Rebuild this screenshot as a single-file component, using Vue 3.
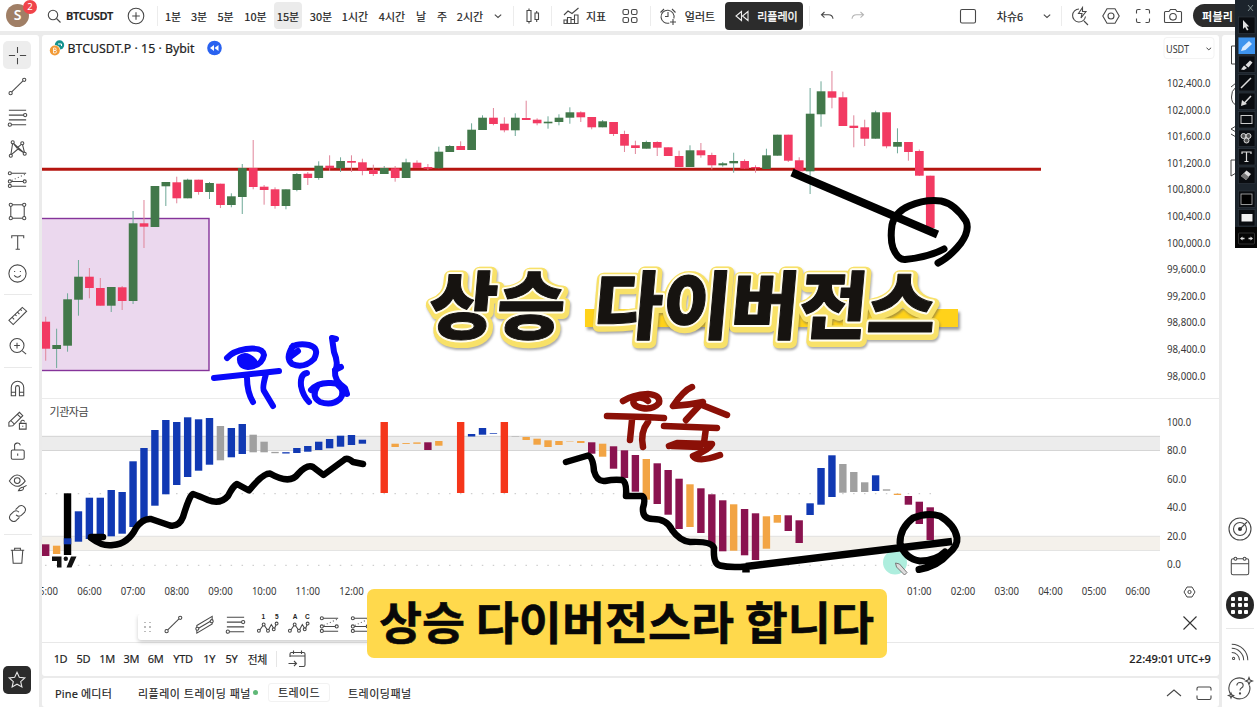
<script setup>
const icons = {
  search: '<circle cx="11" cy="11" r="4.7"/><path d="M14.5 14.5l4 4"/>',
  plus: '<circle cx="12" cy="12" r="7.8"/><path d="M12 8.2v7.6M8.2 12h7.6"/>',
  chev: '<path d="M8.8 10.6l3.2 2.8 3.2-2.8"/>',
  candles: '<path d="M7 6.5h4v11H7zM9 4.500v2M9 17.500v2M15 9h3.500v6.500H15zM16.700 7v2M16.700 15.500v2.500"/>',
  indic: '<path d="M5 11l4-4 4 2.500 6.500-5.500M5 19.500v-3.500h3v3.500M8.500 19.500v-6h3.500v6M12 19.500v-4h3.500v4M15.500 19.500v-8.500h3.500v8.500M4.500 19.500h15"/>',
  grid4: '<rect x="5" y="5.500" width="5.500" height="5" rx="1.500"/><rect x="13.500" y="5.500" width="5.500" height="5" rx="1.500"/><rect x="5" y="13.500" width="5.500" height="5" rx="1.500"/><rect x="13.500" y="13.500" width="5.500" height="5" rx="1.500"/>',
  alert: '<path d="M17.800 14.500a6.500 6.500 0 1 0-4.500 4.500M12 8v4.500H9M4.500 8.500l3.500-3.500M16 5l3.500 3.500M17 15v6M14 18h6"/>',
  rewind: '<path d="M11.500 7.500v9L6 12zM18 7.500v9L12.500 12z"/>',
  undo: '<path d="M9.500 8L6.500 10.800l3 2.800M6.500 10.800h7q4 0 4.500 4"/>',
  redo: '<path d="M14.500 8l3 2.800-3 2.800M17.500 10.800h-7q-4 0-4.500 4"/>',
  square: '<rect x="4.500" y="5.500" width="15" height="13.500" rx="1.500"/>',
  quick: '<path d="M11 5a6.500 6.500 0 1 0 6.500 7.500M16 17l4 4M14.500 3.500l-4 6h3.500l-1 4.500 5-6.500h-3.500z"/>',
  hex: '<path d="M8 4.800h8l4.200 7.200-4.200 7.200H8L3.800 12z"/><circle cx="12" cy="12" r="3"/>',
  full: '<path d="M5.500 9.500V7q0-1.500 1.500-1.500h2.500M14.500 5.500H17q1.500 0 1.500 1.500v2.500M18.500 14.500V17q0 1.500-1.500 1.500h-2.500M9.500 18.500H7q-1.500 0-1.500-1.500v-2.500"/>',
  camera: '<path d="M3.500 8.500q0-1 1-1H8L9.500 5.500h5L16 7.500h3.500q1 0 1 1v9q0 1-1 1h-15q-1 0-1-1z"/><circle cx="12" cy="12.800" r="3.300"/>',
  cross: '<path d="M12 3v6.500M12 14.500V21M3 12h6.500M14.500 12H21"/>',
  trend: '<circle cx="4.800" cy="19" r="1.700"/><circle cx="19" cy="5" r="1.700"/><path d="M6 17.700L17.700 6.200"/>',
  fib: '<path d="M3 4.500h18M3 9.500h16M3 14.500h18M5.500 19.500H21"/><circle cx="20" cy="9.500" r="1.700" fill="#fff"/><circle cx="4" cy="19.500" r="1.700" fill="#fff"/>',
  pattern: '<path d="M5 19L7 6l4.500 5.500L17 7l2.500 10-7-4.500L5 19M7 6l12.500 11"/><circle cx="5" cy="19.500" r="1.600" fill="#fff"/><circle cx="7" cy="5.500" r="1.600" fill="#fff"/><circle cx="17" cy="6.500" r="1.600" fill="#fff"/><circle cx="19.500" cy="17.500" r="1.600" fill="#fff"/>',
  forecast: '<path d="M5 5.500h16M5 14h14M5 19h16"/><path d="M6 13L20 6.500" stroke-dasharray="1 2.500"/><circle cx="4" cy="5.500" r="1.600" fill="#fff"/><circle cx="4" cy="14" r="1.600" fill="#fff"/><circle cx="19.500" cy="14" r="1.600" fill="#fff"/><circle cx="4" cy="18.700" r="1.600" fill="#fff"/>',
  shape: '<rect x="5" y="5" width="14" height="14"/><circle cx="5" cy="5" r="1.700" fill="#fff"/><circle cx="19" cy="5" r="1.700" fill="#fff"/><circle cx="5" cy="19" r="1.700" fill="#fff"/><circle cx="19" cy="19" r="1.700" fill="#fff"/>',
  text: '<path d="M6 7.500V5h12.500v2.500M12.200 5v14M10 19h4.500"/>',
  smile: '<circle cx="12" cy="12" r="9"/><path d="M8.500 14q3.500 3.800 7 0M9 9.300v1.200M15 9.300v1.200"/>',
  ruler: '<path d="M3 17L17 3.500l4.500 4L7.500 21.500zM6.500 14l2 2M9.500 11l1.500 1.500M12 8.500l2 2M15 5.500l1.500 1.500"/>',
  zoomin: '<circle cx="11.500" cy="11" r="7.300"/><path d="M17 16.500l4 3.500M11.500 8v6M8.500 11h6"/>',
  magnet: '<path d="M5.500 19.500V11a6.500 6.500 0 0 1 13 0v8.500h-4.500V11a2 2 0 0 0-4 0v8.500zM5.500 16h4.500M14 16h4.500"/>',
  penlock: '<path d="M3 14L14 3.500l3.500 3.500L7 17.500 3 18zM5 12l4 4M12 5.500l3.500 3.500"/><path d="M14 15h7v6h-7zM15.500 15v-2q2-2.500 4 0M17.500 17.500v1"/>',
  lock: '<rect x="5.500" y="10.500" width="13.500" height="9.500" rx="1.500"/><path d="M9 10.500V7a3 3 0 0 1 6-1.500M12.200 14v2.500"/>',
  eye: '<path d="M3.500 10.500q8-12.500 16.500 0-8.500 11-16.500 0z"/><circle cx="11.700" cy="10" r="3"/><path d="M13 20.500q2-4 5-3.500 1.500 3.500-5 3.500zM18 17l3.500-2"/>',
  link: '<path d="M10 8l3.500-3.500q3-2 5.500.5t.5 5.500L16 14q-3 2-5.500-.500M14 16l-3.500 3.500q-3 2-5.500-.500t-.500-5.500L8 10q3-2 5.500.500" />',
  trash: '<path d="M5 6.500h14M9 6.500V4.500h6v2M6.500 6.500L7.500 20h9l1-13.500"/>',
  star: '<path d="M12 4.300l2.300 5 5.500.6-4.100 3.700 1.200 5.400-4.900-2.800L7.100 19l1.200-5.400-4.100-3.700 5.500-.6z"/>',
  channel: '<path d="M4 13L20 3.500v8L4 21zM4 17l16-9.500"/><circle cx="4.500" cy="16.500" r="1.600" fill="#fff"/><circle cx="19.500" cy="8.500" r="1.600" fill="#fff"/>',
  wave: '<path d="M3.500 18.500L8 12l4.500 6.500L16 12l3 5 2.500-6"/><circle cx="3" cy="18.500" r="1.500" fill="#fff"/><circle cx="8" cy="12" r="1.500" fill="#fff"/><circle cx="12.500" cy="18.500" r="1.500" fill="#fff"/><circle cx="18.500" cy="17" r="1.500" fill="#fff"/><circle cx="21.500" cy="11" r="1.500" fill="#fff"/>',
  close: '<path d="M5.500 5.500l13 13M18.500 5.500l-13 13"/>',
  goto: '<path d="M5 10V7q0-1.500 1.500-1.500h12Q20 5.500 20 7v11q0 1.500-1.500 1.500H14M5 9h15M8.500 3.500V7M16.500 3.500V7M3.500 16.500h8M9 14l2.500 2.500L9 19"/>',
  up: '<path d="M5 15l7-6 7 6"/>',
  winmax: '<path d="M5 9.500V7.500Q5 6 6.500 6h11Q19 6 19 7.500v2M5 14.500v2.500q0 1.500 1.500 1.500h11q1.500 0 1.500-1.500v-2.500"/>',
  radar: '<circle cx="12" cy="12" r="11"/><circle cx="12" cy="12" r="6.500"/><circle cx="12" cy="12" r="1.500" fill="#222"/><path d="M12 12l7-7"/>',
  cal: '<rect x="2.500" y="4" width="19" height="17.500" rx="2"/><path d="M2.500 9.500h19"/><circle cx="7" cy="4" r="1.600" fill="#fff"/><circle cx="17" cy="4" r="1.600" fill="#fff"/>',
  feed: '<circle cx="5" cy="19" r="1.200"/><path d="M3 12.500a8.500 8.500 0 0 1 8.500 8.500M3 8a13 13 0 0 1 13 13M3 3.500A17.500 17.500 0 0 1 20.500 21"/>',
  help: '<path d="M17 3.500a10.500 10.500 0 1 0 4.500 6M8.800 9.500q.200-3 3.200-3t3.200 2.700q0 1.800-1.800 2.800-1.400.8-1.400 2.500"/><circle cx="12" cy="17.500" r=".600"/><path d="M21 1.500l1 2.500 2.500 1-2.500 1-1 2.500-1-2.500-2.500-1 2.500-1zM3 17l.700 1.800 1.800.700-1.800.700L3 22l-.700-1.800-1.800-.700 1.800-.700z" fill="#fff"/>',
}

const top = [
  { i: 'search', w: 22, m: 43 }, { t: 'BTCUSDT', w: 49, k: 'sym' }, { i: 'plus', w: 24, m: 10 }, { s: 1, w: 1, m: 9 },
  { t: '1분', w: 26, m: 2 }, { t: '3분', w: 26 }, { t: '5분', w: 27 }, { t: '10분', w: 31, m: 1 }, { t: '15분', w: 28, m: 3, k: 'on' },
  { t: '30분', w: 30, m: 4 }, { t: '1시간', w: 38 }, { t: '4시간', w: 36 }, { t: '날', w: 20, m: 1 }, { t: '주', w: 20, m: 1 },
  { t: '2시간', w: 34, m: 1 }, { i: 'chev', w: 24, m: -1 }, { s: 1, w: 1, m: 3 }, { i: 'candles', w: 24, m: 6 }, { s: 1, w: 1, m: 7 },
  { i: 'indic', w: 24, m: 7 }, { t: '지표', w: 24, m: 1 }, { i: 'grid4', w: 24, m: 10 }, { s: 1, w: 1, m: 8 }, { i: 'alert', w: 24, m: 5 },
  { t: '얼러트', w: 34, m: 3 }, { t: '리플레이', i: 'rewind', w: 78, m: 8, k: 'replay' }, { s: 1, w: 1, m: 6 },
  { i: 'undo', w: 24, m: 5 }, { i: 'redo', w: 24, m: 7, k: 'dim' }, { i: 'square', w: 24, m: 86 }, { t: '차슈6', w: 32, m: 14, k: 'sb' },
  { i: 'chev', w: 24, m: 9 }, { s: 1, w: 1, m: 2 }, { i: 'quick', w: 24, m: 6 }, { i: 'hex', w: 24, m: 7 }, { i: 'full', w: 24, m: 8 },
  { i: 'camera', w: 24, m: 6 }, { t: '퍼블리', w: 70, m: 8, k: 'pub' },
]
const left = ['cross', 'trend', 'fib', 'pattern', 'forecast', 'shape', 'text', 'smile', '', 'ruler', 'zoomin', '', 'magnet', 'penlock', 'lock', 'eye', 'link', '', 'trash']
const favs = ['trend', 'channel', 'fib', 'wave', 'wave', 'forecast', 'forecast']
const ranges = [['1D', 15], ['5D', 16], ['1M', 17], ['3M', 17], ['6M', 17], ['YTD', 23], ['1Y', 15], ['5Y', 15], ['전체', 22]]

const G = '#42784a', R = '#f23a62'
const X = (i) => 45.7 + i * 10.92
// [up?, body top, body bottom, wick top, wick bottom]
const candles = [
  [0,321.7,348.7,316.7,360.7],[1,345,349,328.7,368],[1,299.3,345.7,293.3,351.7],[1,276.7,299.7,260,315.7],[0,276.7,288,268,298.3],
  [0,288,305.7,278,305.7],[1,287,305.7,287,312],[0,287.3,301,286,310],[1,223.3,301,211,304],[0,223.3,226.7,200,248],[1,186,227,186,227],
  [1,182,186.3,182,206],[0,182.3,198.3,176.7,203.3],[1,179.7,198.3,178.7,198.3],[0,179.7,192,179.7,194.7],[1,183,192,182,199],
  [0,183.7,205,183.7,208],[1,196.3,205,193.3,207.3],[1,168,197,164,214],[0,168,187,140,189.3],[0,186.7,190,185,204.7],[0,189.3,206,187.3,208.7],
  [1,189.3,206,189.3,209.3],[1,174,190,173,191.3],[0,173.7,178,172,185],[1,165.7,178,161.3,179.7],[0,165.7,168.3,155.3,171],[1,161,168.3,157.3,172],
  [0,161,162.7,155.3,172],[0,162.3,171,158.7,175.3],[0,170,174,164.7,176],[1,168,174,166,174],[0,168.3,178,166,181.7],[1,162.3,178,158.7,178],
  [0,162.7,168,160.3,168],[0,167,168.7,164,170],[1,151.7,168.3,146.7,168.3],[1,146,152,145,152],[0,146,150,141.3,150],[1,129.7,150,123.3,150],
  [1,117.7,130,115.3,130],[0,117.7,124,108,125.3],[0,123.7,130.3,117.3,132.3],[1,117.7,130.3,113.3,136],[0,118,120,100.7,120],[0,119.7,123.3,118.3,125.3],
  [1,121.7,123.3,116.3,128.7],[1,117.7,122,114.3,125.3],[1,112.3,117.7,107.3,123.7],[0,112.3,117.3,111.3,122],[0,117,127.3,117,129.3],[1,121.3,127.3,120,127.3],
  [0,122,134,122,136],[0,134,145.7,130.7,152],[0,145.3,148,140.7,154],[1,142,148.7,140.7,148.7],[0,142,147.7,141.3,156],[0,147.3,156,147.3,156],
  [0,156,167,150.7,167],[1,150.3,167,145.3,167],[0,150.3,155.3,143,157.7],[0,155,165.3,152.7,169.3],[1,163.3,165.3,162,166.7],[1,161,163.3,152.7,172.7],
  [0,161,168.7,159.3,168.7],[0,167,168.3,165.3,172.7],[1,155.3,169,148.7,169],[1,134.7,155.7,134.7,155.7],[0,134.7,160.7,134.7,162],[0,160.3,171.3,157.3,171.3],
  [1,113.7,171.3,88,194],[1,91.3,114.3,81.3,126.7],[0,91.3,97.7,71,108.3],[0,97.3,126,91.7,126],[0,125.7,128,115.3,147.3],[0,127.3,138.7,119.7,146],
  [1,112.3,138.7,110.7,138.7],[0,112.3,146.3,112.3,148.3],[1,142,146.7,128.3,153.3],[0,142,152,142,160.7],[0,151,175.7,149.5,176],[0,175.7,228,175.7,228],
]
const C = { b: '#1139b3', g: '#a0a0a0', o: '#f2a444', m: '#8a134f', r: '#f5361a', k: '#000' }
const bars = [
  [0,'m',544.3,556],[1,'o',545.7,554],[2,'k',493.3,555],[2,'b',538.3,544.3],[3,'b',511.3,541.7],[4,'b',497.7,539],[5,'b',497.7,539],[6,'b',490,536.3],
  [7,'b',492,533.7],[8,'b',461.3,527],[9,'b',448,520],[10,'b',430,505.7],[11,'b',420,494.3],[12,'b',422,485],[13,'b',417.3,477],[14,'b',419.3,470.7],
  [15,'b',418,464.7],[16,'g',426,460.3],[17,'b',428,457.3],[18,'b',424,454],[19,'g',434.7,452.3],[20,'g',441.7,452.3],[21,'g',451.9,453.2],[22,'b',452.2,453.5],
  [23,'b',448,453],[24,'b',446,451.7],[25,'b',441.7,450],[26,'b',439,448.3],[27,'b',435.7,446.7],[28,'b',435,445],[29,'b',439.7,443.7],[31,'r',422,493],
  [32,'o',443.7,447],[33,'o',443,443.9],[34,'o',442.4,443.8],[35,'m',442.3,450],[36,'o',441,445.7],[38,'r',422,493],[39,'b',434,436.5],[40,'b',428,434.7],
  [41,'b',433.1,433.8],[42,'r',422,493],[43,'g',436.4,436.8],[44,'o',437,440],[45,'o',438.7,444.7],[46,'o',440.3,447],[47,'o',441,445],[48,'o',441.4,441.8],
  [49,'o',441,443],[50,'m',442.3,453.7],[51,'o',443.7,456.7],[52,'m',446.3,468.7],[53,'m',450.3,478],[54,'m',455,491.7],[55,'o',459,499.7],[56,'m',463.3,504],
  [57,'m',470,514.7],[58,'m',478.7,529],[59,'o',484.3,527],[60,'m',488.3,533],[61,'m',494.3,545],[62,'m',500.3,551.3],[63,'o',504.3,550.7],[64,'m',509,555.3],
  [65,'m',513.3,560],[66,'o',516.3,548.7],[67,'o',515,522.7],[68,'m',515.3,531],[69,'m',520.3,543],[70,'b',503.3,515],[71,'b',468,504.7],[72,'b',455.3,497],
  [73,'g',464,492.7],[74,'g',472,492],[75,'g',482.3,492],[76,'b',475.3,491],[77,'g',489.3,490.7],[78,'o',493.7,495],[79,'m',496,504.7],[80,'m',501.7,524],[81,'m',507.3,540],
]
const prices = Array.from({ length: 12 }, (_, i) => ({ t: (102400 - i * 400).toLocaleString('en-US') + '.0', y: 82.9 + i * 26.6, w: i < 7 ? 43.5 : 38.5 }))
const levels = [100, 80, 60, 40, 20, 0].map((v, i) => ({ t: v + '.0', y: 421.7 + i * 28.5, w: v === 100 ? 24 : v ? 19.5 : 14 }))
// hours 13:00 to 00:00 lie under the caption
const hours = Array.from({ length: 26 }, (_, i) => ({ n: i, t: String((i + 5) % 24).padStart(2, '0') + ':00', x: X(i * 4) })).filter((h) => h.n < 8 || h.n > 19)
</script>

<template>
  <div class="app">
    <header class="top">
      <div class="avatar">S<b>2</b></div>
      <div v-for="(c, n) in top" :key="n" class="cell" :class="[c.k, { sep: c.s }]" :style="{ width: c.w + 'px', marginLeft: (n ? c.m || 0 : c.m - 29) + 'px' }">
        <svg v-if="c.i" class="ic" viewBox="0 0 24 24" v-html="icons[c.i]" />
        <span v-if="c.t">{{ c.t }}</span>
      </div>
    </header>

    <div class="body">
      <nav class="left">
        <template v-for="(n, k) in left" :key="k">
          <div v-if="n" class="tool" :class="{ act: n === 'cross' }"><svg class="ic" viewBox="0 0 24 24" v-html="icons[n]" /></div>
          <div v-else class="rule"><i /></div>
        </template>
        <div class="starbtn"><svg class="ic" viewBox="0 0 24 24" v-html="icons.star" /></div>
      </nav>

      <main class="center">
        <section class="panel chartpanel">
          <svg class="chart" viewBox="42 35 1177 570">
            <rect x="38" y="218.500" width="171" height="152" fill="#ebd8ee" stroke="#85349a" stroke-width="1.400" />
            <path d="M42 398.500h1177" stroke="#ebebeb" />
            <rect x="42" y="436" width="1118" height="14.500" fill="#ececec" />
            <path d="M42 436.300h1118M42 450.500h1118" stroke="#cdcdcd" stroke-width=".8" />
            <rect x="42" y="536" width="1118" height="14.500" fill="#f4f1eb" />
            <path d="M42 536.300h1118M42 550.500h1118" stroke="#dedede" stroke-width=".8" />
            <path d="M45 493.700H932M45 565.300H932" stroke="#c4c4c4" stroke-width="1" stroke-dasharray="1.500 9.420" />
            <path d="M42 169.300H1041" stroke="#b5150f" stroke-width="3" />
            <g v-for="(c, i) in candles" :key="'c' + i">
              <rect :x="X(i) - 0.5" :y="c[3]" width="1" :height="c[4] - c[3]" :fill="c[0] ? '#6fa998' : '#e0859a'" />
              <rect :x="X(i) - 4.3" :y="c[1]" width="8.700" :height="c[2] - c[1]" :fill="c[0] ? G : R" />
            </g>
            <rect v-for="(b, i) in bars" :key="'b' + i" :x="X(b[0]) - 3.7" :y="b[2]" width="7.400" :height="b[3] - b[2]" :fill="C[b[1]]" />
            <path d="M52 556.500h9.500v11H57v-6.500h-5zM71 556.500h5.500l-5 11h-5z" fill="#111" /><circle cx="65.800" cy="558.800" r="2.200" fill="#111" />
            <text x="49.500" y="416" textLength="39" class="kr">기관자금</text>

            <g class="lab">
              <text v-for="p in prices" :key="p.t" x="1167" :y="p.y + 4" :textLength="p.w" lengthAdjust="spacingAndGlyphs">{{ p.t }}</text>
              <text v-for="p in levels" :key="p.t" x="1167" :y="p.y + 4" :textLength="p.w" lengthAdjust="spacingAndGlyphs">{{ p.t }}</text>
              <text v-for="(h, i) in hours" :key="i" :x="h.x - 12.2" y="595" textLength="24.500" lengthAdjust="spacingAndGlyphs">{{ h.t }}</text>
              <rect x="1164" y="37.500" width="50" height="21" rx="3" fill="#fff" stroke="#f3f3f3" />
              <text x="1166" y="52.500" textLength="23" lengthAdjust="spacingAndGlyphs">USDT</text>
            </g>
            <path d="M1206.500 47.800l2.300 2 2.300-2" class="thin" />
            <path d="M1187 587h5l3 5-3 5h-5l-3-5z" class="thin" /><circle cx="1189.500" cy="592" r="1.600" class="thin" />

            <circle cx="59.500" cy="45" r="4.700" fill="#15938f" /><path d="M58 44h3.500v2" stroke="#fff" fill="none" />
            <circle cx="54.800" cy="50.500" r="5.600" fill="#fff" /><circle cx="54.800" cy="50.500" r="5" fill="#f29a35" />
            <path d="M53.500 48h2q1.500 1.200 0 2.400h-2zM53.500 50.400h2.300q1.500 1.300 0 2.600h-2.300z" stroke="#fff" stroke-width=".8" fill="none" />
            <text x="67.500" y="53.300" textLength="127" class="title" lengthAdjust="spacingAndGlyphs">BTCUSDT.P · 15 · Bybit</text>
            <circle cx="214.500" cy="48" r="7.300" fill="#2962f0" /><path d="M214 45v6l-4-3zM218.500 45v6l-4-3z" fill="#fff" />

            <circle cx="895" cy="562.500" r="12" fill="#aeeede" />

            <g class="pen blue">
              <path d="M227 358Q233 351 246 349Q263 347 264 355Q262 366 248 367Q239 366 240 358Q246 353 254 361M240 359L250 364M214 378L279 371M247 378Q247 392 253 402M266 374Q262 388 264 391L273 406" />
              <path d="M293 346Q285 358 292 364Q304 369 314 359Q320 348 309 345Q298 343 292 347M298 351L290 357M332 338L336 339M332 338L334 352Q339 364 335 371Q334 381 345 388L347 394M335 370L341 367M307 373Q300 374 301 386Q303 396 309 402M311 390Q318 382 331 383Q344 384 345 390M317 387Q311 397 320 402Q332 406 340 399Q346 391 338 385" />
            </g>
            <g class="pen red">
              <path d="M623 401Q632 395 648 394Q661 395 659 403Q653 410 642 408Q631 406 634 399Q642 395 648 401M607 416L645 417L664 418M632 420Q631 430 630 440M648 422Q640 432 643 447" />
              <path d="M692 387Q684 390 673 406Q689 405 703 402Q696 409 686 420M702 405L727 415M664 426L717 428M706 428L704 443M669 446L677 443L712 444Q709 450 693 456Q698 463 720 455M672 446L700 447" />
            </g>
            <g class="pen">
              <path d="M792 172.500L937.500 234.500" class="fat" />
              <path d="M944 249Q929 257 905 259.500Q898 260 893 248Q890 239 892 225Q895 212 909 206Q925 199 941 201Q955 204 966 221Q970 230 961 243Q950 257 938 263" />
              <path class="w6" d="M91 537H103M91 538Q103 547 113 545Q128 544 136 528Q143 518 151 519L170 525.500Q179 527 183 517Q190 494 193 494Q199 496 208 500Q220 505 228 496Q233 486 237 484L249 490.500Q263 473 270 473.500Q290 485 298 474Q307 464 313 467L323.500 475L344 460Q347 457 353 462L363 464" />
              <path class="w6" d="M566 462L588 455.500Q593 457 594 471Q597 482 605 481Q614 479 622 480Q627 482 626 496H642Q646 498 643 508Q642 519 653 519Q667 519 672 530Q680 541 690 542Q712 541 714 548Q713 564 720 565.500Q730 568 746 566.500" />
              <path d="M746 566.500L952 541.500M746 568V572.500" class="w7" />
              <path d="M945 552Q936 561 920 561Q905 559 900 543Q900 528 913 518Q927 512 940 516Q955 525 957 538Q958 546 948 554Q938 566 919 569.500" />
            </g>
            <path d="M895.500 563l4 1 7.500 8.500-2.500 2.500-8-8z" fill="#ddd" stroke="#777" />

            <path class="underline" d="M585 309h373v18H585z" />
            <g class="headline">
              <g v-for="l in ['glow', 'halo', 'ink']" :key="l" :class="l">
                <text transform="translate(427 333) skewX(-5)" textLength="136" lengthAdjust="spacingAndGlyphs">상승</text>
                <text transform="translate(592 333) skewX(-5)" textLength="342" lengthAdjust="spacingAndGlyphs">다이버전스</text>
              </g>
            </g>
          </svg>
          <div class="favrow">
            <div class="favbar">
              <span class="dots"><i v-for="n in 6" :key="n" /></span>
              <span v-for="(f, k) in favs" :key="k" class="fav">
                <svg class="ic" viewBox="0 0 24 24" v-html="icons[f]" />
                <em v-if="f === 'wave'"><s>{{ k === 3 ? '1' : 'A' }}</s><s>{{ k === 3 ? '5' : 'C' }}</s></em>
              </span>
            </div>
            <svg class="ic x" viewBox="0 0 24 24" v-html="icons.close" />
          </div>
          <div class="ranges">
            <span v-for="r in ranges" :key="r[0]" :style="{ width: r[1] + 'px' }">{{ r[0] }}</span>
            <i class="vr" />
            <svg class="ic" viewBox="0 0 24 24" v-html="icons.goto" />
            <b>22:49:01 UTC+9</b>
          </div>
        </section>
        <section class="panel tabs">
          <span class="pine">Pine 에디터</span><span class="rp">리플레이 트레이딩 패널<i /></span><span class="trade">트레이드</span><span class="tp">트레이딩패널</span>
          <svg class="ic tu" viewBox="0 0 24 24" v-html="icons.up" /><svg class="ic" viewBox="0 0 24 24" v-html="icons.winmax" />
        </section>
      </main>

      <aside class="right">
        <svg class="edge" viewBox="0 0 14 160"><path d="M14 11H9.500v18H14M9 52l5-4M14 52q-5 4-4.500 10 0 6 4.500 8M9 94l5-3M9 94l5 3M9 99l5 3M14 125H9v16l5-3" /></svg>
        <svg class="ic radar" viewBox="0 0 24 24" v-html="icons.radar" />
        <svg class="ic cal" viewBox="0 0 24 24" v-html="icons.cal" />
        <div class="apps"><i v-for="n in 9" :key="n" /></div>
        <hr>
        <svg class="ic feed" viewBox="0 0 24 24" v-html="icons.feed" />
        <svg class="ic help" viewBox="0 0 24 24" v-html="icons.help" />
      </aside>
    </div>

    <svg class="pal" viewBox="0 0 22 248">
      <rect width="22" height="248" fill="#1c242c" /><rect y="227" width="22" height="21" fill="#050505" />
      <g fill="#0a0d11" stroke="#323b44" stroke-width=".6">
        <rect v-for="y in [17, 37.5, 56, 74.500, 93, 111.500, 130, 148.500, 167, 191, 209.500]" :key="y" x="3.500" :y="y" width="16.500" height="16.500" />
      </g>
      <rect x="3.500" y="37.500" width="16.500" height="16.500" fill="#3e94ee" />
      <path d="M13 5l5 6M18 5l-5 6" stroke="#9aa" stroke-width=".8" />
      <path d="M8 20v9l2-2 2 3.500 1.500-.8-2-3.200h2.700z" fill="#e2e2e2" />
      <path d="M6 51l1.500-4L14 41l3 3-6.500 6z" fill="#d8eaff" />
      <path d="M6 69.500l3-4 3 2.500-3 2zM10.500 65l4.500-4.500 2.500 2-4 5z" fill="#ddd" />
      <path d="M6 88L16 78M8.500 104l7.500-8" stroke="#ddd" stroke-width="1.500" /><path d="M6 106l1-6 5 4z" fill="#ddd" />
      <rect x="6" y="115.500" width="11" height="8" fill="none" stroke="#ccc" />
      <g fill="#555" stroke="#ddd"><circle cx="8.500" cy="136" r="2.500" /><circle cx="13.500" cy="136" r="2.500" /><circle cx="11.500" cy="140.500" r="2.500" /></g>
      <path d="M7 154v-2h9v2M11.500 152v9.500M9.500 161.500h4" stroke="#ddd" fill="none" stroke-width="1.200" />
      <path d="M6 176l5 4 5-6-4.500-3.500z" fill="#ddd" /><path d="M6 176l3-3 5 4-3 3z" fill="#777" />
      <rect x="6" y="194" width="11" height="10.500" fill="#000" stroke="#bbb" stroke-width=".8" />
      <rect x="6.500" y="214" width="11" height="7.500" fill="#f2f2f2" />
      <rect x="3.500" y="233" width="16" height="11" rx="1" fill="none" stroke="#444" stroke-width=".7" />
      <path d="M5 238.500l2.500-2v1.300h2v1.400h-2v1.300zM18 238.500l-2.500-2v1.300h-2v1.400h2v1.300z" fill="#ddd" />
    </svg>

    <svg class="caption" viewBox="0 0 520 69"><text x="12" y="51" textLength="495" lengthAdjust="spacingAndGlyphs">상승 다이버전스라 합니다</text></svg>
  </div>
</template>

<style>
html, body { overflow: hidden; }
</style>
<style scoped>
.app { position: relative; width: 1257px; height: 707px; overflow: hidden; display: flex; flex-direction: column; background: #ebebeb; color: #222; font-family: "Noto Sans", "Noto Sans CJK KR", sans-serif; font-size: 11px; }
.app * { box-sizing: border-box; }
.ic { width: 24px; height: 24px; flex: none; fill: none; stroke: #484848; stroke-width: 1.1; overflow: visible; }
.top { height: 31px; display: flex; align-items: center; background: #fff; flex: none; margin-bottom: 3px; border-bottom: 0; }
.avatar { position: relative; width: 23px; height: 23px; margin-left: 6px; border-radius: 50%; background: #a07f66; color: #fff; font: 600 14px/22px "Noto Sans"; text-align: center; flex: none; }
.avatar b { position: absolute; left: 17px; top: -4px; width: 14px; height: 14px; border-radius: 50%; background: #f0444a; font: 9.500px/14px "Noto Sans"; }
.cell { display: flex; align-items: center; justify-content: center; flex: none; height: 28px; white-space: nowrap; font-family: "Noto Sans CJK KR", sans-serif; -webkit-text-stroke: .2px #222; }
.sep { width: 1px; height: 20px; background: #ececec; }
.sym { font-family: "Noto Sans", sans-serif; font-size: 11px; font-weight: 600; letter-spacing: -.2px; }
.on { background: #ebebeb; border-radius: 4px; height: 27px; }
.dim .ic { stroke: #b5b5b5; }
.replay { background: #2c2c2c; border-radius: 4px; color: #fff; -webkit-text-stroke: .3px #fff; gap: 3px; }
.replay .ic { stroke: #eee; }
.pub { background: #2c2c2c; color: #fff; border-radius: 12px; height: 23px; font-weight: 700; -webkit-text-stroke: 0; justify-content: flex-start; padding-left: 9px; letter-spacing: .3px; }
.body { flex: 1; display: flex; min-height: 0; margin-top: 1px; }
.left { width: 39px; background: #fff; padding-top: 4.500px; margin-right: 3px; display: flex; flex-direction: column; border-top-right-radius: 3px; }
.tool { height: 31.200px; width: 35px; display: flex; align-items: center; justify-content: center; }
.act { position: relative; }
.act::before { content: ""; position: absolute; left: 3px; top: 1.500px; width: 28px; height: 28px; border-radius: 5px; background: #ededed; }
.act .ic { position: relative; }
.tool .ic { width: 23px; height: 23px; }
.rule { height: 11px; display: flex; align-items: center; padding-left: 4px; }
.rule i { width: 28px; height: 1px; background: #e9e9e9; }
.starbtn { width: 28px; height: 28px; margin: auto 0 13px 3px; background: #2b2b2b; border-radius: 5px; display: flex; align-items: center; justify-content: center; }
.starbtn .ic { stroke: #e8e8e8; }
.center { width: 1177px; display: flex; flex-direction: column; }
.panel { background: #fff; border-radius: 3px; }
.chartpanel { height: 641px; display: flex; flex-direction: column; }
.chart { width: 1177px; height: 570px; display: block; flex: none; }
.chart text { font-family: "Noto Sans", "Noto Sans CJK KR", sans-serif; }
.lab text { font-size: 10.500px; fill: #383838; }
.chart .kr { font-size: 11px; fill: #444; }
.chart .title { font-size: 13px; fill: #222; stroke: #222; stroke-width: .2px; }
.thin { fill: none; stroke: #444; stroke-width: 1; }
.pen path { fill: none; stroke: #000; stroke-width: 7; stroke-linecap: round; stroke-linejoin: round; }
.pen .w6 { stroke-width: 6.500; }
.pen .w7 { stroke-width: 7.500; stroke-linecap: butt; }
.pen .fat { stroke-width: 8; stroke-linecap: butt; }
.blue path { stroke: #0909fa; stroke-width: 6; }
.red path { stroke: #8b1007; stroke-width: 6.500; }
.underline { fill: #ffd21a; filter: drop-shadow(2px 3px 1.500px rgba(60, 60, 60, .5)); }
.chart .headline text { font-family: "Noto Sans CJK KR", sans-serif; font-weight: 900; font-size: 74px; stroke-linejoin: round; }
.glow { filter: drop-shadow(1.500px 2px 1px rgba(90, 90, 90, .5)); transform: translate(1px, 2px); }
.glow text { fill: #f8e168; stroke: #f8e168; stroke-width: 12px; }
.halo text { fill: #fff; stroke: #fffdf0; stroke-width: 5px; }
.ink text { fill: #161310; stroke: #161310; stroke-width: 1px; }
.favrow { height: 38px; display: flex; border-bottom: 1px solid #e8e8e8; justify-content: space-between; padding: 9px 17px 0 96px; flex: none; }
.favbar { width: 270px; height: 26px; display: flex; align-items: center; box-shadow: 0 2px 4px rgba(0, 0, 0, .2); clip-path: inset(0 -6px -8px -6px); border-radius: 3px; }
.dots { width: 7px; margin: 0 7px 0 6px; display: grid; grid-template-columns: 1px 1px; gap: 3px 4px; }
.dots i { width: 1.500px; height: 1.500px; background: #bbb; }
.fav { position: relative; width: 31.200px; display: flex; justify-content: center; flex: none; margin-top: -5px; }
.fav .ic { width: 23px; height: 23px; }
.fav em { position: absolute; top: 0; left: 10px; width: 17px; display: flex; justify-content: space-between; font: 700 6.500px/8px "Liberation Sans"; }
.fav s { text-decoration: none; }
.x { margin-top: -3px; stroke: #333; }
.ranges { flex: 1; display: flex; align-items: center; padding: 0 8px 2px 11px; gap: 7.300px; font-size: 11px; -webkit-text-stroke: .15px #222; }
.ranges span { text-align: center; white-space: nowrap; display: flex; justify-content: center; letter-spacing: -.3px; }
.vr { width: 1px; height: 16px; background: #e6e6e6; }
.ranges .ic { margin-left: 1px; }
.ranges b { margin-left: auto; font-weight: 500; font-size: 11px; letter-spacing: .1px; }
.tabs { flex: 1; margin-top: 2px; display: flex; align-items: center; padding-left: 13px; font-family: "Noto Sans", "Noto Sans CJK KR"; white-space: nowrap; }
.tabs span { font-size: 11px; -webkit-text-stroke: .15px #222; }
.tabs .pine { width: 83px; letter-spacing: .15px; }
.tabs .rp { width: 130px; display: flex; align-items: center; gap: 2px; letter-spacing: .5px; }
.rp i { width: 5px; height: 5px; border-radius: 50%; background: #5fb877; }
.tabs .trade { width: 62px; height: 19px; line-height: 17px; text-align: center; border: 1px solid #f2f2f2; border-radius: 3px; margin-right: 18px; letter-spacing: .4px; }
.tabs .tp { letter-spacing: .5px; }
.tu { margin-left: auto; margin-right: 6px; }
.tabs .ic:last-child { margin-right: 3px; }
.right { flex: 1; margin-left: 3px; background: #fff; border-top-left-radius: 3px; display: flex; flex-direction: column; align-items: center; }
.edge { width: 14px; height: 160px; align-self: flex-start; fill: none; stroke: #444; }
.radar { margin-top: 322px; }
.cal { margin-top: 14px; width: 22px; height: 22px; }
.apps { margin-top: 14px; width: 28px; height: 28px; flex: none; border-radius: 50%; background: #262626; display: grid; grid-template-columns: repeat(3, 4px); gap: 2.500px; place-content: center; }
.apps i { height: 4px; background: #fff; border-radius: 1px; }
.right hr { width: 28px; border: 0; height: 1px; background: #e8e8e8; margin: 9px 0 12px; flex: none; }
.feed { width: 22px; height: 22px; }
.help { margin-top: 13px; }
.pal { position: absolute; left: 1235px; top: 0; width: 22px; height: 248px; }
.caption { position: absolute; left: 367px; top: 588.500px; width: 520px; height: 69px; background: #ffd94c; border-radius: 7px; }
.caption text { font-family: "Noto Sans CJK KR", sans-serif; font-weight: 700; font-size: 45px; fill: #080808; stroke: #080808; stroke-width: .5px; }
</style>
